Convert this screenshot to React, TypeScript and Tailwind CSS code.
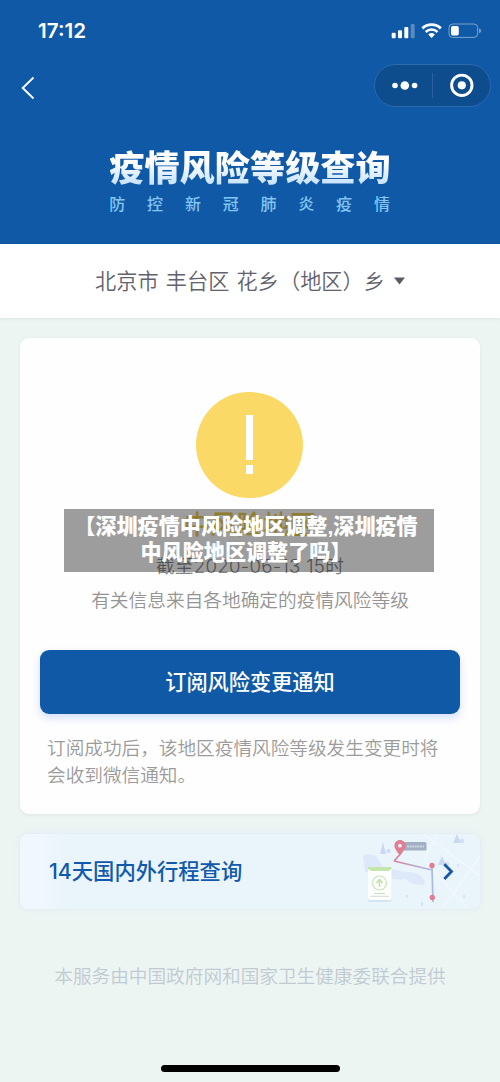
import { FaLocationDot } from 'react-icons/fa6';

function StatusIcons() {
  return (
    <svg width="92" height="18" viewBox="0 0 92 18" fill="none">
      <rect x="1.7" y="10.8" width="4" height="5.4" rx="1" fill="#fff" />
      <rect x="8" y="8.2" width="4" height="8" rx="1" fill="#fff" />
      <rect x="14.3" y="5" width="4" height="11.2" rx="1" fill="#fff" />
      <rect x="20.7" y="2" width="4" height="14.2" rx="1" fill="#fff" fillOpacity="0.3" />
      <path d="M32.4 6.4a13.2 13.2 0 0 1 18.4 0" stroke="#fff" strokeWidth="2.9" />
      <path d="M35.7 10a8.5 8.5 0 0 1 11.8 0" stroke="#fff" strokeWidth="2.5" />
      <path d="M38.3 12.5a5 5 0 0 1 6.6 0L41.6 16z" fill="#fff" />
      <rect x="59" y="2" width="28.6" height="13.4" rx="3.6" stroke="#fff" strokeOpacity="0.45" />
      <rect x="61" y="4" width="7.8" height="9.6" rx="1.8" fill="#fff" />
      <path d="M89.2 6.2c1.2.5 1.7 1.4 1.7 2.6s-.5 2-1.7 2.5z" fill="#fff" fillOpacity="0.5" />
    </svg>
  );
}

function Capsule() {
  return (
    <div className="flex h-[43px] w-[117px] items-center rounded-full border border-[#2c69ae] bg-[#0d4c8d]">
      <svg width="57" height="41" viewBox="0 0 57 41" fill="#fff">
        <circle cx="20" cy="20.5" r="2.8" />
        <circle cx="29.8" cy="20.5" r="4.3" />
        <circle cx="39.6" cy="20.5" r="2.8" />
      </svg>
      <div className="h-[25px] w-px bg-[#2a619e]" />
      <svg width="57" height="41" viewBox="0 0 57 41" fill="none">
        <circle cx="28.8" cy="20.3" r="10.2" stroke="#fff" strokeWidth="2.9" />
        <circle cx="28.8" cy="20.3" r="4.1" fill="#fff" />
      </svg>
    </div>
  );
}

function TripMap() {
  return (
    <div className="relative h-[75px] w-[130px]">
      <svg width="130" height="75" viewBox="0 0 130 75" fill="none">
        <path d="M74 0l56 42M130 22L92 75M88 0L74 26L118 75" stroke="#f1f8fd" strokeWidth="1.5" />
        <path d="M13 21q6-2 13 1l7 11q14 3 22 5q16-1 20 9l-1 4q-12 0-19-6q-12 2-22-3l-18-4z" fill="#d8e5f8" fillOpacity="0.75" />
        <path d="M33 8l-3 12h6zM107 0l-4 9h8zM92 22l-4 9h8z" fill="#c9d9f4" />
        <circle cx="38.5" cy="17" r="2.2" fill="#d0def6" />
        <circle cx="112" cy="7" r="2.2" fill="#d0def6" />
        <circle cx="97" cy="30" r="2.2" fill="#d0def6" />
        <path d="M57 61v3M72 68v4M114 61v3M108 30v3" stroke="#d8e5f8" strokeWidth="2" />
        <rect x="53" y="8" width="23.5" height="8.5" rx="1.5" fill="#a0afc2" />
        <path d="M57 12.4h17" stroke="#cbd6e2" strokeWidth="2" strokeDasharray="2 0.6" />
        <path d="M50.5 20l-6.5 7" stroke="#d9849a" strokeWidth="1.8" />
        <path d="M44 27l38 9" stroke="url(#route)" strokeWidth="1.7" />
        <path d="M82 34l1 34" stroke="#abb8e2" strokeWidth="1.7" />
        <circle cx="82" cy="31.5" r="2.7" fill="#df7f91" />
        <circle cx="82.3" cy="63.5" r="2.7" fill="#df7f91" />
        <rect x="18" y="34" width="23.5" height="34" rx="2" fill="#d5e4f3" />
        <rect x="18" y="33" width="23.5" height="33" rx="2" fill="#fdfefe" />
        <path d="M18 33h23.5v2l-3 2h-17l-3.5-2z" fill="#c5e5ae" />
        <circle cx="29.5" cy="49" r="7" stroke="#c8e5b4" strokeWidth="1.2" />
        <path d="M29.5 53v-7m-3 3l3-3.5l3 3.5" stroke="#c2e3a8" strokeWidth="1.6" />
        <path d="M24 59.5h11" stroke="#c8e1bd" strokeWidth="1" />
        <path d="M20 62.3h19" stroke="#d8d9d8" strokeWidth="1" />
        <path d="M94.3 30.3l7.2 7.2l-7.2 7.5" stroke="#1557a5" strokeWidth="2.8" />
        <defs>
          <linearGradient id="route" x1="44" y1="27" x2="82" y2="36" gradientUnits="userSpaceOnUse">
            <stop stopColor="#d9849a" />
            <stop offset="1" stopColor="#adbae5" />
          </linearGradient>
        </defs>
      </svg>
      <FaLocationDot className="absolute top-[6px] left-[43px] h-[15px] w-[14px] text-[#df7f91]" />
    </div>
  );
}

export default function App() {
  return (
    <div className="relative flex h-[1082px] w-[500px] flex-col overflow-hidden bg-[#edf5f3] font-['Noto_Sans_CJK_SC',sans-serif]">
      {/* Header */}
      <header className="h-[244px] flex-none bg-[#1059a6] text-white">
        <div className="flex h-[62px] items-center justify-between pr-[18px] pl-[38px]">
          <span className="font-[Inter,sans-serif] text-[20.6px] font-semibold">17:12</span>
          <StatusIcons />
        </div>
        <div className="flex h-[48px] items-start justify-between pt-[2px] pr-[9px] pl-[20px]">
          <svg width="16" height="24" viewBox="0 0 16 24" fill="none" className="mt-[12px]">
            <path d="M13.5 1.5L2.7 12l10.8 10.5" stroke="#fff" strokeWidth="1.9" />
          </svg>
          <Capsule />
        </div>
        <div className="flex flex-col items-center pt-[33px]">
          <h1 className="bg-linear-to-b from-white from-40% to-[#c7e2ff] to-90% bg-clip-text text-[35.2px] leading-[46px] font-black whitespace-nowrap text-transparent">
            疫情风险等级查询
          </h1>
          <p className="mt-px -mr-[21px] text-[16px] leading-[26px] font-medium tracking-[21.8px] whitespace-nowrap text-[#83c6f5]">
            防控新冠肺炎疫情
          </p>
        </div>
      </header>

      {/* Region picker */}
      <div className="flex h-[74px] flex-none items-center justify-center gap-[9px] bg-white text-[21.2px] text-[#62626c] shadow-[0_1px_3px_rgba(0,0,0,0.08)]">
        <span className="pb-[2px] font-[350] whitespace-nowrap [word-spacing:2.5px]">北京市 丰台区 花乡（地区）乡</span>
        <svg width="11" height="8" viewBox="0 0 11 8" fill="#5b5b66">
          <path d="M0 0.5h11L5.5 7.5z" />
        </svg>
      </div>

      {/* Risk card */}
      <section className="mx-5 mt-5 flex h-[476px] flex-none flex-col items-center rounded-[9px] bg-[#fefefe] px-5 pt-[54px] shadow-[0_1px_4px_rgba(0,0,0,0.06)]">
        <div className="mr-px flex h-[106px] w-[107px] flex-none flex-col items-center rounded-full bg-[#fbd966] pt-[23px]">
          <div className="h-[45px] w-[6.5px] bg-white" />
          <div className="mt-[5px] h-[9px] w-[6.5px] bg-white" />
        </div>
        <h2 className="mt-[5px] text-[26.4px] leading-[40px] font-medium text-[#e8c94c]">中风险地区</h2>
        <p className="mt-[5px] pt-px font-[Inter,'Noto_Sans_CJK_SC',sans-serif] text-[18.7px] leading-[35px] font-[350] tracking-[0.25px] whitespace-nowrap text-[#858585]">
          截至2020-06-13 15时
        </p>
        <p className="text-[18.7px] leading-[30px] font-[350] whitespace-nowrap text-[#949494]">
          有关信息来自各地确定的疫情风险等级
        </p>
        <button className="mt-[36px] h-[64px] w-full flex-none rounded-[9px] bg-[#1059a6] pb-[2px] text-[21.2px] font-medium text-white shadow-[0_4px_9px_rgba(80,120,255,0.24)]">
          订阅风险变更通知
        </button>
        <p className="mt-[19px] w-[406px] text-[18.65px] leading-[27px] font-[350] text-[#9b9b9b]">
          订阅成功后，该地区疫情风险等级发生变更时将
          <br />
          会收到微信通知。
        </p>
      </section>

      {/* Trip lookup */}
      <a
        href="#"
        className="mx-5 mt-5 flex h-[75px] flex-none items-center justify-between rounded-[8px] bg-linear-to-r from-[#f0f7fe] from-5% to-[#eaf4fb] to-10% pl-[29px] shadow-[0_0_5px_rgba(190,210,245,0.4)]"
      >
        <span className="pt-px font-[Inter,'Noto_Sans_CJK_SC',sans-serif] text-[21.3px] font-medium whitespace-nowrap text-[#1059ad]">
          14天国内外行程查询
        </span>
        <TripMap />
      </a>

      <footer className="mt-[51px] flex flex-col items-center">
        <p className="text-[18.65px] leading-[30px] font-[350] whitespace-nowrap text-[#c0cad2]">
          本服务由中国政府网和国家卫生健康委联合提供
        </p>
        <div className="mt-[75px] h-[7px] w-[179px] rounded-full bg-black" />
      </footer>

      {/* Caption strip on top of the card */}
      <div className="absolute top-[509px] left-[64px] h-[63px] w-[370px] bg-black/38 pt-[5px] pr-[6px] text-center font-['Liberation_Sans','Noto_Sans_CJK_SC',sans-serif] text-[21.1px] leading-[26px] font-black whitespace-nowrap text-white">
        【深圳疫情中风险地区调整,深圳疫情
        <br />
        中风险地区调整了吗】
      </div>
    </div>
  );
}
